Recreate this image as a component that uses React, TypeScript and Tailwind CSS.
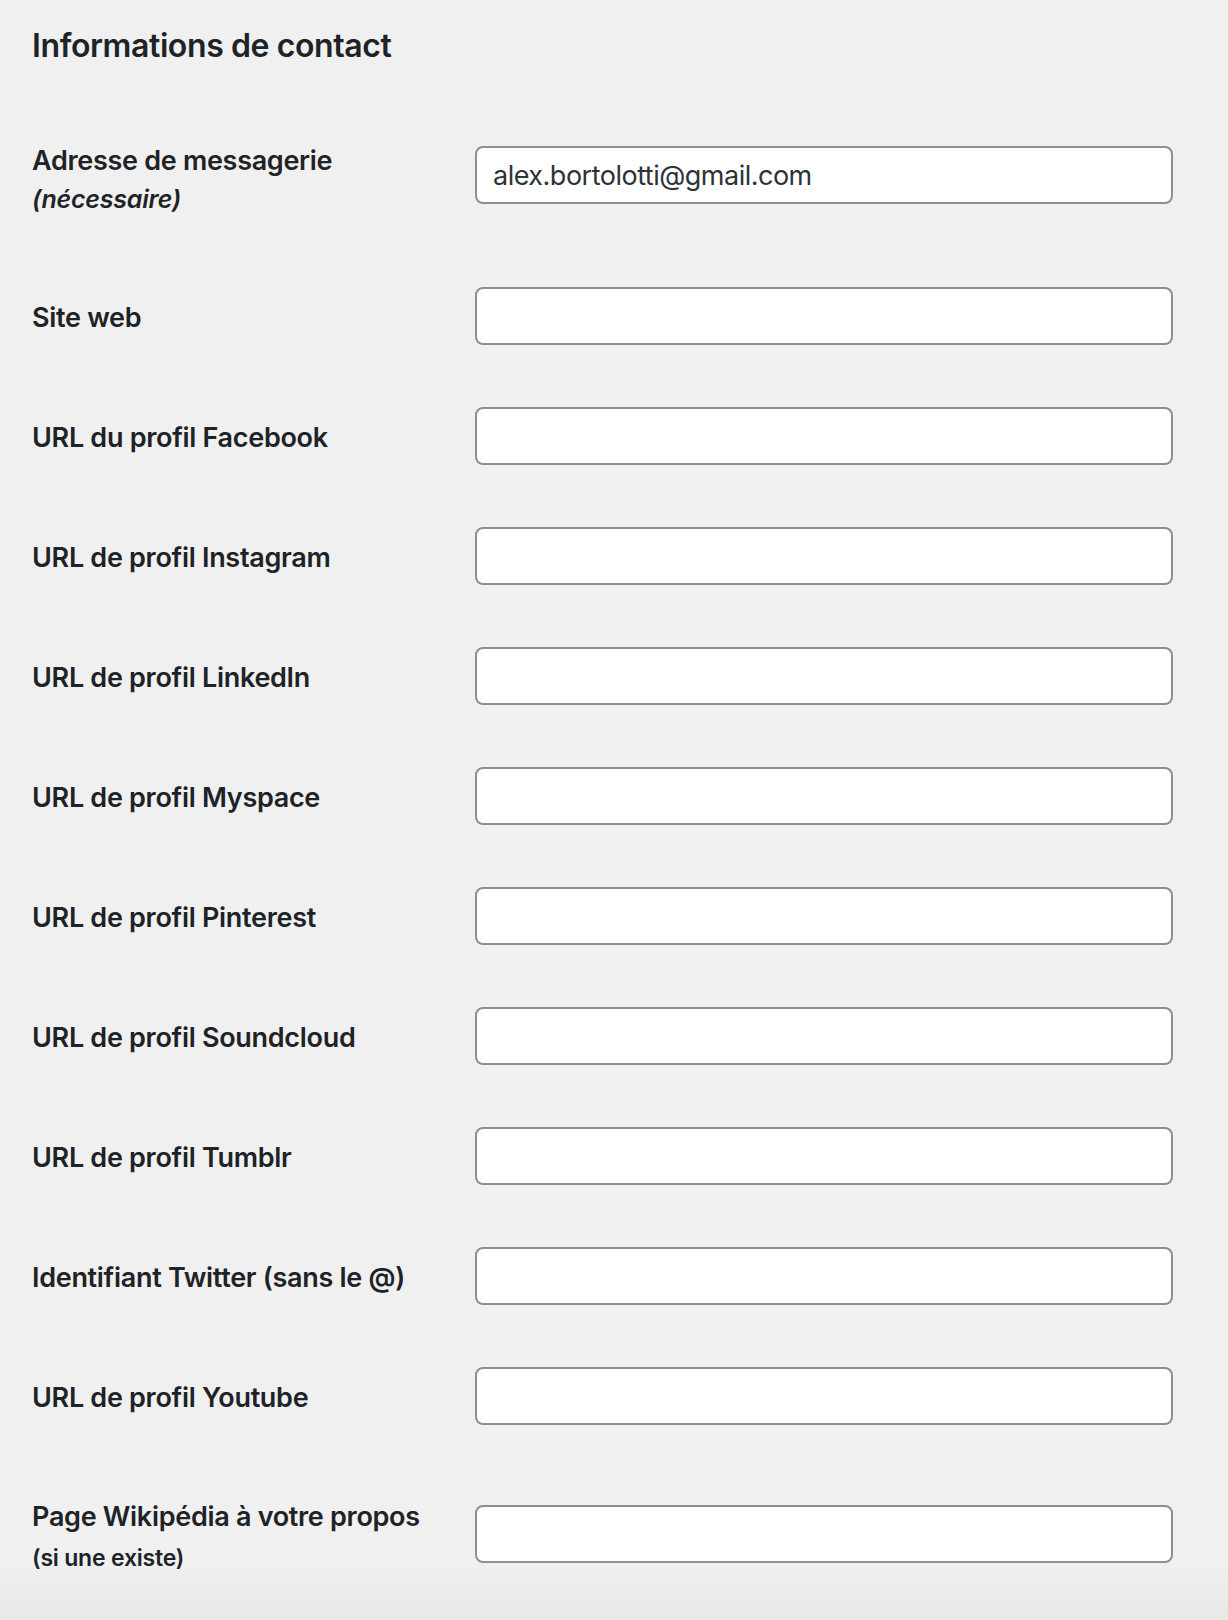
import React from "react";

type Field = {
  id: string;
  label: string;
  value?: string;
};

const fields: Field[] = [
  { id: "url", label: "Site web" },
  { id: "facebook", label: "URL du profil Facebook" },
  { id: "instagram", label: "URL de profil Instagram" },
  { id: "linkedin", label: "URL de profil LinkedIn" },
  { id: "myspace", label: "URL de profil Myspace" },
  { id: "pinterest", label: "URL de profil Pinterest" },
  { id: "soundcloud", label: "URL de profil Soundcloud" },
  { id: "tumblr", label: "URL de profil Tumblr" },
  { id: "twitter", label: "Identifiant Twitter (sans le @)" },
  { id: "youtube", label: "URL de profil Youtube" },
];

function TextInput({ id, defaultValue }: { id: string; defaultValue?: string }) {
  return (
    <input
      id={id}
      type="text"
      defaultValue={defaultValue}
      className="w-[698px] h-[58px] shrink-0 bg-white border-2 border-[#8c8f94] rounded-[8px] px-[16px] text-[27px] tracking-[-0.5px] text-[#2c3338] outline-none"
    />
  );
}

export default function App() {
  return (
    <div
      className="w-[1228px] min-h-[1620px] flex flex-col text-[#1d2327] bg-gradient-to-b from-[#f0f0f1] from-[96.5%] to-[#e8e8e9]"
      style={{ fontFamily: "Inter, 'Noto Sans', sans-serif" }}
    >
      {/* Section title */}
      <div className="h-[116px] pl-[32px] pt-[26px]">
        <h2 className="text-[32px] leading-[40px] font-semibold tracking-[-0.4px]">Informations de contact</h2>
      </div>

      {/* Email (required) */}
      <div className="flex items-start h-[140px] pl-[32px]">
        <label htmlFor="email" className="w-[443px] shrink-0 pt-[27px] font-semibold">
          <span className="block text-[27px] leading-[36px] tracking-[-0.3px]">Adresse de messagerie</span>
          <span className="block mt-[5px] text-[25px] leading-[30px] tracking-[-0.2px] italic">(nécessaire)</span>
        </label>
        <div className="mt-[30px]">
          <TextInput id="email" defaultValue="alex.bortolotti@gmail.com" />
        </div>
      </div>

      {fields.map((f) => (
        <div key={f.id} className="flex items-center h-[120px] pl-[32px]">
          <label
            htmlFor={f.id}
            className="w-[443px] shrink-0 pt-[4px] text-[27px] leading-[36px] tracking-[-0.3px] font-semibold"
          >
            {f.label}
          </label>
          <TextInput id={f.id} />
        </div>
      ))}

      {/* Wikipedia */}
      <div className="flex items-start flex-1 pl-[32px]">
        <label htmlFor="wikipedia" className="w-[443px] shrink-0 pt-[43px] font-semibold">
          <span className="block text-[27px] leading-[36px] tracking-[-0.3px]">Page Wikipédia à votre propos</span>
          <span className="block mt-[8px] text-[23px] leading-[30px] tracking-[-0.2px]">(si une existe)</span>
        </label>
        <div className="mt-[49px]">
          <TextInput id="wikipedia" />
        </div>
      </div>
    </div>
  );
}
